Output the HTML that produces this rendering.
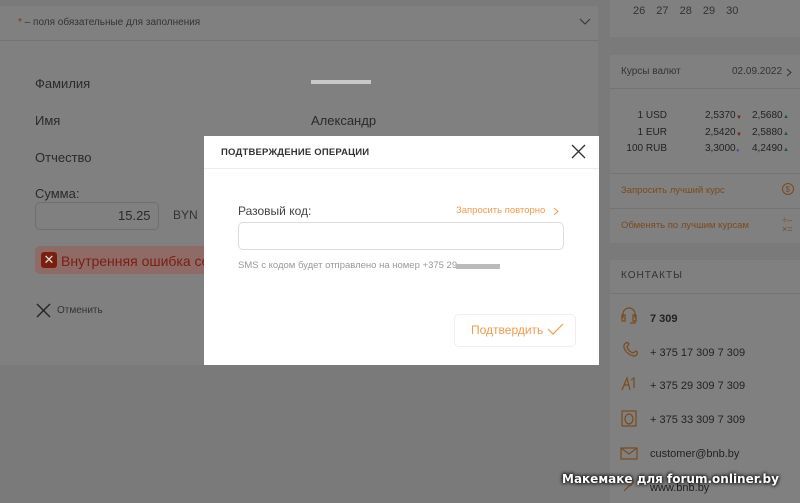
<!DOCTYPE html>
<html><head><meta charset="utf-8"><style>
*{margin:0;padding:0;box-sizing:border-box}
body{width:800px;height:503px;overflow:hidden;background:#7a7a7a;font-family:"Liberation Sans",sans-serif;position:relative;color:#2a2a2a}
.a{position:absolute}
.t{position:absolute;white-space:nowrap}
</style></head><body>
<div class="a" style="left:0;top:0;width:598px;height:365px;background:#808080"></div>
<div class="a" style="left:0;top:0;width:598px;height:6px;background:#7a7a7a"></div>
<div class="a" style="left:0;top:40px;width:598px;height:1px;background:#747474"></div>
<div class="t" style="left:18px;top:17px;font-size:10px;color:#333"><span style="color:#8a2a1a">*</span> – поля обязательные для заполнения</div>
<svg class="a" style="left:579px;top:18px" width="12" height="8"><path d="M1 1l5 5 5-5" stroke="#333" fill="none"/></svg>
<div class="t" style="left:35px;top:76px;font-size:13px">Фамилия</div>
<div class="a" style="left:311px;top:80px;width:60px;height:4px;background:#c8c8c8"></div>
<div class="t" style="left:35px;top:113px;font-size:13px">Имя</div>
<div class="t" style="left:311px;top:113px;font-size:13px">Александр</div>
<div class="t" style="left:35px;top:150px;font-size:13px">Отчество</div>
<div class="t" style="left:35px;top:186px;font-size:13px">Сумма:</div>
<div class="a" style="left:35px;top:202px;width:124px;height:28px;border:1px solid #6f6f6f;border-radius:5px"></div>
<div class="t" style="left:118px;top:208px;font-size:13px">15.25</div>
<div class="t" style="left:173px;top:208px;font-size:12px;color:#333">BYN</div>
<div class="a" style="left:35px;top:246px;width:175px;height:28px;background:#8f6b68;border-radius:5px"></div>
<div class="a" style="left:41px;top:252px;width:16px;height:16px;background:#7a1e10;border-radius:3px;color:#ddd;font-size:13px;line-height:16px;text-align:center">✕</div>
<div class="t" style="left:61px;top:253px;font-size:14px;color:#7a1e10">Внутренняя ошибка сер</div>
<svg class="a" style="left:36px;top:303px" width="15" height="15"><path d="M1 1l13 13M14 1L1 14" stroke="#222" stroke-width="1.3"/></svg>
<div class="t" style="left:57px;top:305px;font-size:10px;color:#333">Отменить</div>
<div class="a" style="left:610px;top:0;width:190px;height:37px;background:#808080"></div>
<div class="t" style="left:633px;top:5px;font-size:11px;color:#333;word-spacing:8px">26 27 28 29 30</div>
<div class="a" style="left:610px;top:55px;width:190px;height:188px;background:#808080"></div>
<div class="a" style="left:610px;top:88px;width:190px;height:1px;background:#747474"></div>
<div class="t" style="left:621px;top:66px;font-size:10px;color:#333">Курсы валют</div>
<div class="t" style="left:732px;top:66px;font-size:10px;color:#333">02.09.2022</div>
<svg class="a" style="left:786px;top:68px" width="6" height="9"><path d="M1 1l4 3.5L1 8" stroke="#333" fill="none"/></svg>
<div class="t" style="left:600px;top:108px;width:67px;text-align:right;font-size:10px;line-height:16.5px;color:#222">1 USD<br>1 EUR<br>100 RUB</div>
<div class="t" style="left:705px;top:108px;font-size:10px;line-height:16.5px;color:#222">2,5370<br>2,5420<br>3,3000</div>
<div class="t" style="left:752px;top:108px;font-size:10px;line-height:16.5px;color:#222">2,5680<br>2,5880<br>4,2490</div>
<div class="t" style="left:736px;top:110px;font-size:6px;line-height:16.5px;color:#7a1e10">▼<br>▼<br><span style="color:#5a4a9a">●</span></div>
<div class="t" style="left:783px;top:109px;font-size:6px;line-height:16.5px;color:#1e5a30">▲<br>▲<br>▲</div>
<div class="a" style="left:610px;top:173px;width:190px;height:1px;background:#747474"></div>
<div class="a" style="left:610px;top:208px;width:190px;height:1px;background:#747474"></div>
<div class="t" style="left:621px;top:185px;font-size:9.5px;color:#7a4a1e">Запросить лучший курс</div>
<svg class="a" style="left:781px;top:182px" width="14" height="14"><circle cx="7" cy="7" r="5.5" stroke="#7a4a1e" fill="none"/><text x="4.5" y="10" font-size="8" fill="#7a4a1e">$</text></svg>
<div class="t" style="left:621px;top:220px;font-size:9.5px;color:#7a4a1e">Обменять по лучшим курсам</div>
<div class="t" style="left:782px;top:216px;font-size:9px;line-height:9px;color:#7a4a1e">÷–<br>×=</div>
<div class="a" style="left:610px;top:260px;width:190px;height:243px;background:#808080"></div>
<div class="a" style="left:610px;top:293px;width:190px;height:1px;background:#747474"></div>
<div class="t" style="left:621px;top:270px;font-size:10px;letter-spacing:1px;color:#333">КОНТАКТЫ</div>
<div class="t" style="left:650px;top:313px;font-size:11px;font-weight:bold;color:#222">7 309</div>
<div class="t" style="left:650px;top:347px;font-size:11px;color:#222">+ 375 17 309 7 309</div>
<div class="t" style="left:650px;top:380px;font-size:11px;color:#222">+ 375 29 309 7 309</div>
<div class="t" style="left:650px;top:414px;font-size:11px;color:#222">+ 375 33 309 7 309</div>
<div class="t" style="left:650px;top:448px;font-size:11px;color:#222">customer@bnb.by</div>
<div class="t" style="left:650px;top:482px;font-size:11px;color:#222">www.bnb.by</div>
<svg class="a" style="left:620px;top:306px" width="18" height="190" fill="none" stroke="#7a4a1e" stroke-width="1.2">
<path d="M3 12V8a6 6 0 0112 0v4M2 9h3v6H2zM13 9h3v6h-3zM15 15v2h-5"/>
<path d="M4 39c2-3 4-3 5-1l-2 3c1 3 3 5 6 6l3-2c2 1 2 3-1 5-6 0-12-6-11-11z"/>
<path d="M2 84l5-12 3 12M4 79h5M11 74l3-2v10"/>
<rect x="2" y="105" width="14" height="15"/><ellipse cx="9" cy="113" rx="4" ry="5"/>
<rect x="1" y="142" width="16" height="11"/><path d="M1 142l8 6 8-6"/>
<path d="M4 185l6-6M6 176l3-3a3 3 0 014 4l-3 3"/>
</svg>
<div class="a" style="left:204px;top:136px;width:395px;height:229px;background:#fff"></div>
<div class="a" style="left:204px;top:168px;width:395px;height:1px;background:#ececec"></div>
<div class="t" style="left:221px;top:147px;font-size:9.5px;font-weight:bold;letter-spacing:0.2px;color:#333">ПОДТВЕРЖДЕНИЕ ОПЕРАЦИИ</div>
<svg class="a" style="left:571px;top:144px" width="15" height="15"><path d="M1 1l13 13M14 1L1 14" stroke="#333" stroke-width="1.3"/></svg>
<div class="t" style="left:238px;top:204px;font-size:12px;color:#444">Разовый код:</div>
<div class="t" style="left:456px;top:205px;font-size:9.5px;color:#f29a4a">Запросить повторно</div>
<svg class="a" style="left:553px;top:207px" width="6" height="9"><path d="M1 1l4 3.5L1 8" stroke="#f29a4a" fill="none"/></svg>
<div class="a" style="left:238px;top:222px;width:326px;height:28px;border:1px solid #dcdcdc;border-radius:5px"></div>
<div class="t" style="left:238px;top:260px;font-size:9.5px;color:#999">SMS с кодом будет отправлено на номер +375 29</div>
<div class="a" style="left:456px;top:264px;width:44px;height:5px;background:#bbb"></div>
<div class="a" style="left:454px;top:314px;width:122px;height:33px;border:1px solid #eee;border-radius:5px"></div>
<div class="t" style="left:471px;top:323px;font-size:12px;color:#f29a4a">Подтвердить</div>
<svg class="a" style="left:547px;top:323px" width="17" height="12"><path d="M1 6l5 5L16 1" stroke="#f29a4a" fill="none" stroke-width="1.2"/></svg>
<div class="t" style="left:562px;top:472px;font-size:12px;font-weight:bold;color:#fff;font-family:'DejaVu Sans',sans-serif;text-shadow:0 0 4px #000,0 0 3px #000">Макемаке для forum.onliner.by</div>
</body></html>
